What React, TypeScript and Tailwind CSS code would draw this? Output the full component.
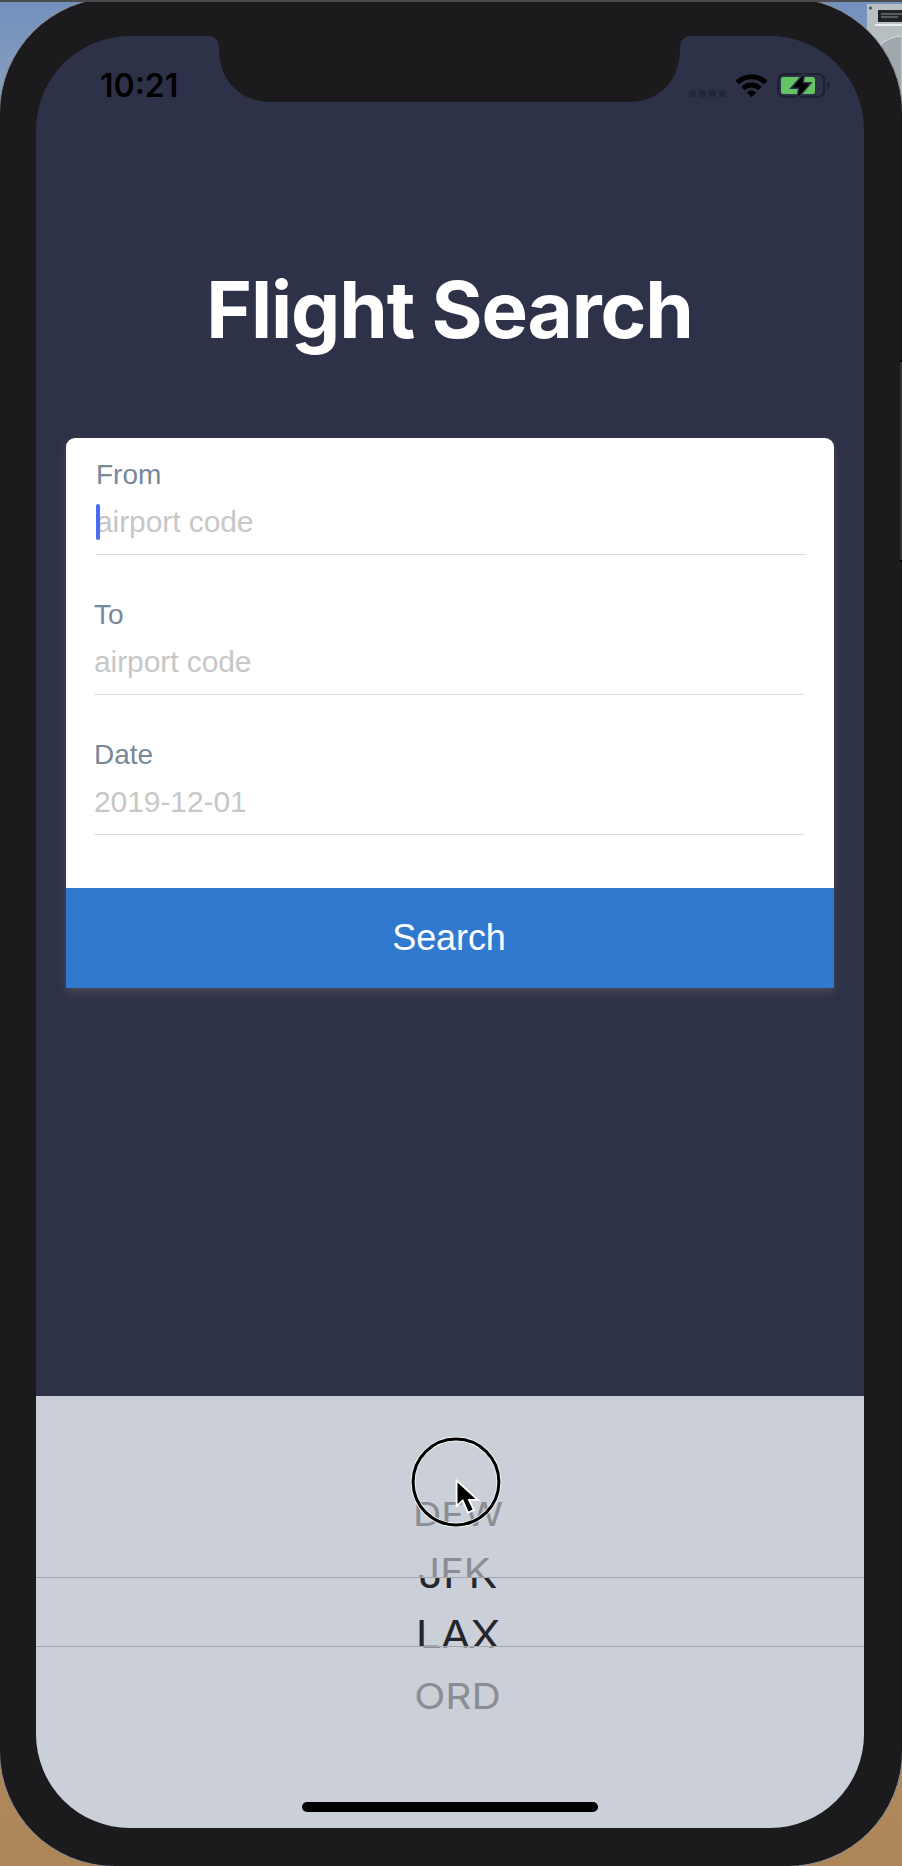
import React from 'react';

type FieldProps = { label: string; placeholder: string; focused?: boolean };

function Field({ label, placeholder, focused }: FieldProps) {
  return (
    <div className={focused ? '-mr-[2px] ml-[2px] h-[140px]' : 'h-[140px]'}>
      <div className="h-8 text-[28px] leading-8 text-[#778899]">{label}</div>
      <div className="relative mt-[13px] h-[51px] border-b border-[#d6dfe6] text-[30px] leading-9 tracking-[-0.08px] text-[#c7c7c7]">
        {placeholder}
        {focused && <span className="absolute left-0 top-0 h-9 w-1 rounded-full bg-[#4a6cf0]" />}
      </div>
    </div>
  );
}

function StatusIcons() {
  return (
    <svg className="absolute left-0 top-0" width="902" height="120" viewBox="0 0 902 120">
      <path
        d="M203 30V36H207C215 36 219 40 219 49C219 80 240 102 271 102H629C660 102 680 80 680 49C680 40 684 36 692 36H696V30Z"
        fill="#1b1a1c"
      />
      <g fill="#24263a">
        <rect x="689" y="90" width="7" height="7" rx="2.5" />
        <rect x="699" y="90" width="7" height="7" rx="2.5" />
        <rect x="709" y="90" width="7" height="7" rx="2.5" />
        <rect x="719" y="90" width="7" height="7" rx="2.5" />
      </g>
      <g fill="none" stroke="#000" strokeWidth="5">
        <path d="M737.2 82.6A20.3 20.3 0 0 1 765.8 82.6" />
        <path d="M743 88.6A12 12 0 0 1 760 88.6" />
      </g>
      <path d="M746.8 92.6A6.4 6.4 0 0 1 756.2 92.6L751.5 97.2Z" />
      <rect x="778.2" y="74.2" width="46" height="22.6" rx="6" fill="none" stroke="#1f2032" strokeWidth="2.2" />
      <path d="M827 81.5Q830 83 830 85.5Q830 88 827 89.500Z" fill="#1f2032" />
      <rect x="781" y="77" width="34" height="17" rx="2.500" fill="#65c466" />
      <path
        d="M803.500 75L792.500 87.500H799.500L798 97L809.500 83.500H802.500Z"
        fill="#000"
        stroke="#2e3248"
        strokeWidth="3"
        paintOrder="stroke"
      />
    </svg>
  );
}

function Wheel() {
  return (
    <div className="relative flex h-[432px] flex-col bg-[#cbcfd8] text-center font-['Inter',sans-serif] text-[36px] leading-[44px] text-[#8b8d95]">
      <div className="h-[181px] overflow-hidden pl-[16px] pt-[96px]">
        <div className="scale-x-[1.09] scale-y-[0.9]">DFW</div>
        <div className="-ml-[8px] mt-[13px] scale-x-[1.11]">JFK</div>
      </div>
      <div className="h-[70px] overflow-hidden border-y border-[#a3a6ae] pl-[16px] text-[40px] leading-[48px] text-[#24262b]">
        <div className="-mt-[28px] scale-x-[1.08]">JFK</div>
        <div className="mt-[13px] scale-x-[1.09]">LAX</div>
      </div>
      <div className="h-[181px] overflow-hidden pl-[15px]">
        <div className="-mt-[34px] scale-x-[1.07]">LAX</div>
        <div className="mt-[17px] scale-x-[1.13]">ORD</div>
      </div>
      <svg className="absolute left-[374px] top-[38px]" width="92" height="96" viewBox="0 0 92 96">
        <circle cx="46" cy="48" r="42.900" fill="none" stroke="#f4f4f6" strokeWidth="4.8" />
        <circle cx="46" cy="48" r="42.900" fill="none" stroke="#000" strokeWidth="3" />
        <path
          d="M47.500 48.500V70L53 65L58.500 77.500L62.700 75.500L57.500 65H65.500Z"
          fill="#000"
          stroke="#fff"
          strokeWidth="3.6"
          paintOrder="stroke"
        />
      </svg>
      <div className="absolute bottom-4 left-[266px] h-[10px] w-[296px] rounded-full bg-black" />
    </div>
  );
}

export default function App() {
  return (
    <div className="relative h-[1866px] w-[902px] overflow-hidden bg-[linear-gradient(180deg,#7390bd_0%,#8aa0bd_6%,#b08a62_90%,#ad8658_100%)] font-['Liberation_Sans',sans-serif]">
      <svg className="absolute right-0 top-0" width="50" height="120" viewBox="0 0 50 120">
        <path d="M15 4H50V120H15Z" fill="#b7bfc3" />
        <path d="M26 10H50V22H26Z" fill="#202326" />
        <path d="M23 25H50" stroke="#eceff0" strokeWidth="2" />
        <path d="M28 45Q38 36 50 36V110Z" fill="#9fa8ad" stroke="#dce1e3" />
        <circle cx="18.500" cy="8" r="1.500" fill="#42505d" />
        <path d="M29 14H50M29 17H46" stroke="#8b9398" strokeWidth="1" />
      </svg>
      <div className="relative -mt-[3px] -ml-px h-[1870px] w-[904px] rounded-[116px] border border-[#8d8f96] bg-[#1b1a1c] pl-9 pt-[38px]">
        <main className="flex h-[1792px] w-[828px] flex-col overflow-hidden rounded-[94px] bg-[#2e3248]">
          <div className="flex h-[100px] shrink-0 pl-[64px] pt-[30px] font-['Inter',sans-serif] text-[32px] font-semibold leading-10 text-black">
            10:21
          </div>
          <h1 className="h-[302px] shrink-0 pt-[127px] pr-[1px] text-center font-['Inter',sans-serif] text-[78px] font-bold leading-[94px] tracking-[-1.1px] text-white">
            Flight Search
          </h1>
          <section className="mx-[30px] flex h-[550px] shrink-0 flex-col overflow-hidden rounded-t-[9px] bg-white shadow-[0_4px_9px_#4a4855]">
            <div className="h-[450px] pl-7 pr-[30px] pt-[21px]">
              <Field label="From" placeholder="airport code" focused />
              <Field label="To" placeholder="airport code" />
              <Field label="Date" placeholder="2019-12-01" />
            </div>
            <button className="h-[100px] bg-[#3179ce] pr-[2px] text-[36px] tracking-[-0.1px] text-white">Search</button>
          </section>
          <div className="mt-auto shrink-0">
            <Wheel />
          </div>
        </main>
      </div>
      <StatusIcons />
      <div className="absolute left-0 top-0 h-[2px] w-full bg-[#4b4b4e]" />
      <div className="absolute right-0 top-[360px] h-[202px] w-[2px] border-y-2 border-black bg-[#303133]" />
    </div>
  );
}
